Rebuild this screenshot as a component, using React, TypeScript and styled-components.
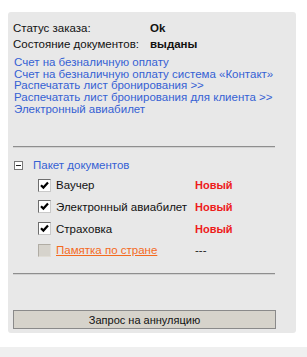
import styled, { createGlobalStyle } from 'styled-components'

const GlobalStyle = createGlobalStyle`
  html, body {
    margin: 0;
    padding: 0;
    background: #ffffff;
    font-family: "Liberation Sans", Arial, sans-serif;
    font-size: 11.5px;
  }
`

const Page = styled.div`
  width: 307px;
  height: 357px;
  display: flex;
  flex-direction: column;
  overflow: hidden;
`

const Panel = styled.div`
  margin: 12px 11px 0 8px;
  height: 321px;
  box-sizing: border-box;
  padding: 8px 21px 0 5px;
  background: #e8e8e8;
  border-radius: 3px;
  display: flex;
  flex-direction: column;
`

const InfoRow = styled.div`
  display: grid;
  grid-template-columns: 137px 1fr;
  height: 16px;
  align-items: center;
  color: #111;
`

const InfoValue = styled.span`
  font-weight: bold;
  font-size: 11.5px;
`

const Links = styled.div`
  margin-top: 5px;
  display: flex;
  flex-direction: column;
`

const TextLink = styled.a`
  color: #3561d4;
  text-decoration: none;
  line-height: 11.7px;
  height: 11.7px;
  padding-left: 1px;
  cursor: pointer;
`

const Divider = styled.div<{ $top: number }>`
  margin-top: ${(p) => p.$top}px;
  height: 1px;
  background: #8e8e8e;
  border-bottom: 1px solid #d2d2d2;
`

const PackageHeader = styled.div`
  margin-top: 9px;
  height: 16px;
  display: flex;
  align-items: center;
  gap: 10px;
  padding-left: 1px;
`

const MinusBox = styled.span`
  width: 7px;
  height: 7px;
  border: 1px solid #777;
  background: #fff;
  position: relative;

  &::after {
    content: '';
    position: absolute;
    left: 1px;
    right: 1px;
    top: 3px;
    height: 1px;
    background: #222;
  }
`

const HeaderLink = styled.span`
  color: #3561d4;
`

const DocList = styled.div`
  margin-top: 1px;
  display: flex;
  flex-direction: column;
`

const DocRow = styled.div`
  height: 21.7px;
  display: grid;
  grid-template-columns: 18px 139px 1fr;
  align-items: center;
  padding-left: 25px;
  color: #111;
`

const CheckBox = styled.span<{ $disabled?: boolean }>`
  width: 11px;
  height: 11px;
  border: 1px solid ${(p) => (p.$disabled ? '#b0aca4' : '#6d6d6d')};
  border-right-color: ${(p) => (p.$disabled ? '#e0ddd6' : '#c9c9c9')};
  border-bottom-color: ${(p) => (p.$disabled ? '#e0ddd6' : '#c9c9c9')};
  background: ${(p) => (p.$disabled ? '#d6d3cc' : '#fff')};
  display: flex;
  align-items: center;
  justify-content: center;
`

const OrangeLink = styled.a`
  color: #f46a1e;
  text-decoration: underline;
`

const StatusNew = styled.span`
  color: #ee1b1b;
  font-weight: bold;
  font-size: 11px;
`

const Dash = styled.span`
  color: #222;
`

const CancelButton = styled.button`
  margin-top: 35px;
  height: 19px;
  width: 263px;
  box-sizing: border-box;
  background: #d6d3cb;
  border: 1px solid #8a8a8a;
  font-family: "Liberation Sans", Arial, sans-serif;
  font-size: 11px;
  color: #111;
  padding: 0;
  cursor: pointer;
`

const BottomStrip = styled.div`
  margin-top: 14px;
  height: 10px;
  background: #efefef;
`

function Check() {
  return (
    <svg width="9" height="9" viewBox="0 0 9 9">
      <path d="M1 4.2 L3.4 6.6 L8 1.6" stroke="#000" strokeWidth="2.2" fill="none" />
    </svg>
  )
}

const docs = [
  { name: 'Ваучер', status: 'Новый' },
  { name: 'Электронный авиабилет', status: 'Новый' },
  { name: 'Страховка', status: 'Новый' },
]

export default function App() {
  return (
    <Page>
      <GlobalStyle />
      <Panel>
        <InfoRow>
          <span>Статус заказа:</span>
          <InfoValue>Ok</InfoValue>
        </InfoRow>
        <InfoRow>
          <span>Состояние документов:</span>
          <InfoValue>выданы</InfoValue>
        </InfoRow>

        <Links>
          <TextLink>Счет на безналичную оплату</TextLink>
          <TextLink>Счет на безналичную оплату система «Контакт»</TextLink>
          <TextLink>Распечатать лист бронирования &gt;&gt;</TextLink>
          <TextLink>Распечатать лист бронирования для клиента &gt;&gt;</TextLink>
          <TextLink>Электронный авиабилет</TextLink>
        </Links>

        <Divider $top={31} />

        <PackageHeader>
          <MinusBox />
          <HeaderLink>Пакет документов</HeaderLink>
        </PackageHeader>

        <DocList>
          {docs.map((d) => (
            <DocRow key={d.name}>
              <CheckBox>
                <Check />
              </CheckBox>
              <span>{d.name}</span>
              <StatusNew>{d.status}</StatusNew>
            </DocRow>
          ))}
          <DocRow>
            <CheckBox $disabled />
            <OrangeLink>Памятка по стране</OrangeLink>
            <Dash>---</Dash>
          </DocRow>
        </DocList>

        <Divider $top={12} />

        <CancelButton>Запрос на аннуляцию</CancelButton>
      </Panel>
      <BottomStrip />
    </Page>
  )
}
